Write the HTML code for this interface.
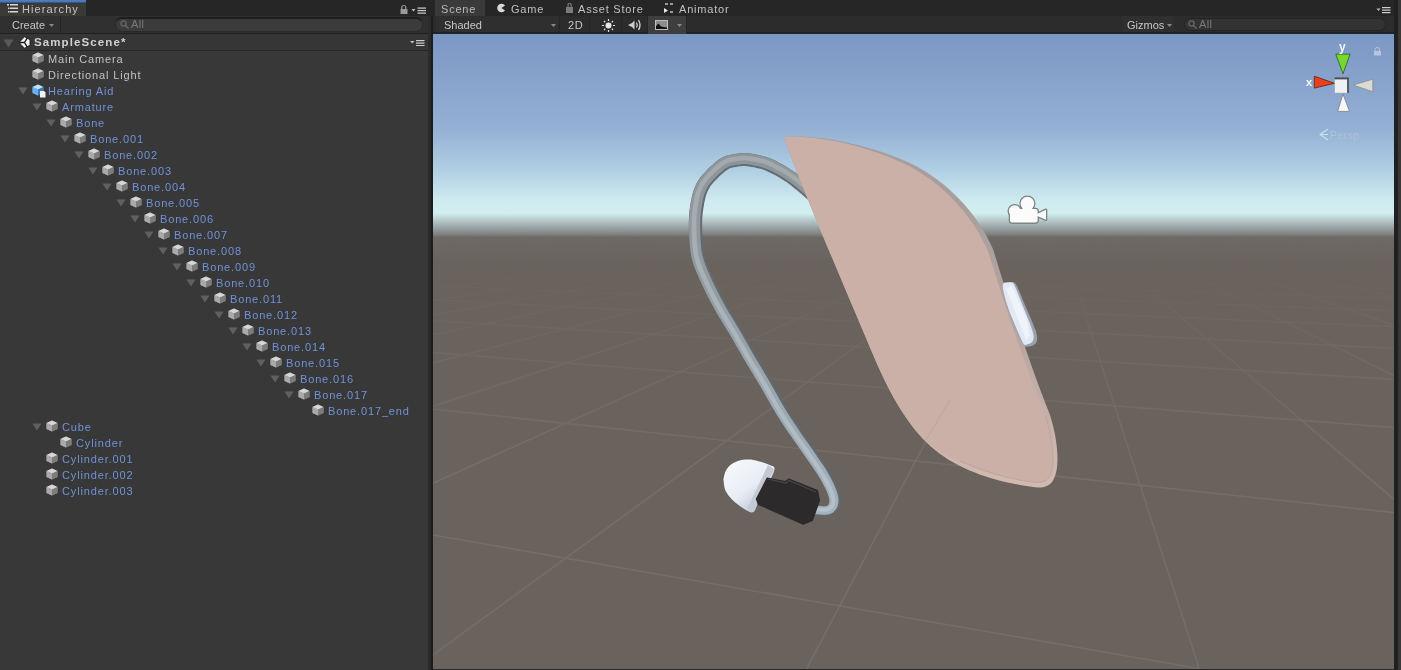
<!DOCTYPE html>
<html><head><meta charset="utf-8">
<style>
*{margin:0;padding:0;box-sizing:border-box}
html,body{width:1401px;height:670px;overflow:hidden;background:#282828;font-family:"Liberation Sans",sans-serif;font-size:11px;color:#c2c2c2}
.abs{position:absolute}
svg{display:block}
#tabbar{left:0;top:0;width:1401px;height:16px;background:#262626}
#hier{left:0;top:34px;width:428px;height:636px;background:#383838}
#hsplit{left:428px;top:16px;width:5px;height:654px;background:#1c1c1c;border-left:3px solid #2b2b2b}
#htab{left:0;top:0;width:86px;height:16px;background:linear-gradient(#4f7fc4 0,#4a74b0 2px,#2e3a4c 3px,#3a3a37 4px,#3a3a37 100%)}
#htoolbar{left:0;top:16px;width:428px;height:18px;background:#303030;border-bottom:1px solid #202020}
#scene{left:433px;top:34px;width:961px;height:635px;background:#6a625c;overflow:hidden}
#stoolbar{left:433px;top:16px;width:961px;height:18px;background:#2c2c2c;border-bottom:2px solid #1e2326}
#stab{left:435px;top:0;width:50px;height:16px;background:#3a3a3a}
#rightedge{left:1394px;top:0px;width:5px;height:670px;background:#202020}
#rightedge2{left:1398px;top:0px;width:3px;height:670px;background:#383838}
.hr{position:absolute;height:16px;line-height:18px;white-space:nowrap;letter-spacing:0.85px;color:#c2c2c2;will-change:transform}
.hr.blue{color:#7192d8}
.txt{position:absolute;z-index:3;will-change:transform;white-space:nowrap;letter-spacing:0.8px;line-height:16px;height:16px}
#sceneheader{left:0;top:34px;width:428px;height:16px;background:#393939;border-bottom:1px solid #2a2a2a}
</style></head><body>
<div class="abs" id="tabbar"></div>
<div class="abs" id="hier"></div>
<div class="abs" id="hsplit"></div>
<div class="abs" id="rightedge"></div><div class="abs" id="rightedge2"></div>
<div class="abs" id="htab"></div>
<div class="txt" style="left:22px;top:1px;color:#c0c4c4;letter-spacing:1.1px">Hierarchy</div>
<div class="abs" id="htoolbar"></div>
<div class="txt" style="left:12px;top:17px;color:#c4c4c4;letter-spacing:0px">Create</div>
<div class="abs" id="stoolbar"></div>
<div class="abs" id="stab"></div>
<div class="txt" style="left:441px;top:1px;color:#b8b8b8">Scene</div>
<div class="txt" style="left:511px;top:1px;color:#c0c0c0">Game</div>
<div class="txt" style="left:578px;top:1px;color:#c0c0c0">Asset Store</div>
<div class="txt" style="left:679px;top:1px;color:#c0c0c0">Animator</div>
<div class="txt" style="left:444px;top:17px;color:#c8c8c8;letter-spacing:0px">Shaded</div>
<div class="txt" style="left:568px;top:17px;color:#c8c8c8;letter-spacing:0.6px">2D</div>
<div class="txt" style="left:1127px;top:17px;color:#c8c8c8;letter-spacing:0px">Gizmos</div>
<div class="abs" id="scene">
<svg width="961" height="635" viewBox="433 34 961 635">
<defs>
<linearGradient id="sky" x1="0" y1="34" x2="0" y2="260" gradientUnits="userSpaceOnUse">
<stop offset="0" stop-color="#7b97c4"/>
<stop offset="0.42" stop-color="#94b0d4"/>
<stop offset="0.62" stop-color="#b4d2e4"/>
<stop offset="0.74" stop-color="#cfebf0"/>
<stop offset="0.793" stop-color="#d2eef0"/>
<stop offset="0.828" stop-color="#b4c4c8"/>
<stop offset="0.858" stop-color="#98a2a4"/>
<stop offset="0.884" stop-color="#828684"/>
<stop offset="0.9" stop-color="#6e6a67"/>
<stop offset="1" stop-color="#6a645f"/>
</linearGradient>
<linearGradient id="gm" x1="0" y1="225" x2="0" y2="460" gradientUnits="userSpaceOnUse"><stop offset="0" stop-color="#000"/><stop offset="0.2" stop-color="#181818"/><stop offset="0.45" stop-color="#707070"/><stop offset="1" stop-color="#fff"/></linearGradient>
<mask id="gridmask" maskUnits="userSpaceOnUse" x="433" y="34" width="961" height="635"><rect x="433" y="34" width="961" height="635" fill="url(#gm)"/></mask>
<linearGradient id="strip" x1="0" y1="140" x2="0" y2="490" gradientUnits="userSpaceOnUse"><stop offset="0" stop-color="#a49c9c"/><stop offset="0.5" stop-color="#b3a39e"/><stop offset="1" stop-color="#d2bab2"/></linearGradient>
<linearGradient id="domeg" x1="728" y1="462" x2="765" y2="508" gradientUnits="userSpaceOnUse"><stop offset="0" stop-color="#f8f9fc"/><stop offset="0.55" stop-color="#e9edf6"/><stop offset="1" stop-color="#b9c2d4"/></linearGradient>
<linearGradient id="tubeA" x1="0" y1="150" x2="0" y2="520" gradientUnits="userSpaceOnUse"><stop offset="0" stop-color="#656c72"/><stop offset="1" stop-color="#5d6870"/></linearGradient>
<linearGradient id="tubeB" x1="0" y1="150" x2="0" y2="520" gradientUnits="userSpaceOnUse"><stop offset="0" stop-color="#8e9599"/><stop offset="0.35" stop-color="#929ba0"/><stop offset="1" stop-color="#a4b2bc"/></linearGradient>
<linearGradient id="tubeC" x1="0" y1="150" x2="0" y2="520" gradientUnits="userSpaceOnUse"><stop offset="0" stop-color="#a4abaf"/><stop offset="1" stop-color="#b6c4ce"/></linearGradient>
</defs>
<rect x="433" y="34" width="961" height="635" fill="#6a625c"/>
<rect x="433" y="34" width="961" height="226" fill="url(#sky)"/>
<!-- grid lines -->
<g stroke="#766d67" stroke-width="1.6" fill="none" mask="url(#gridmask)"><line x1="839.6" y1="222.0" x2="433.0" y2="254.8"/><line x1="854.0" y1="222.0" x2="433.0" y2="258.5"/><line x1="868.4" y1="222.0" x2="433.0" y2="262.7"/><line x1="882.8" y1="222.0" x2="433.0" y2="267.7"/><line x1="897.1" y1="222.0" x2="433.0" y2="273.6"/><line x1="911.5" y1="222.0" x2="433.0" y2="280.8"/><line x1="925.9" y1="222.0" x2="433.0" y2="289.5"/><line x1="940.3" y1="222.0" x2="433.0" y2="300.6"/><line x1="954.7" y1="222.0" x2="433.0" y2="315.1"/><line x1="969.1" y1="222.0" x2="433.0" y2="334.7"/><line x1="983.5" y1="222.0" x2="433.0" y2="362.7"/><line x1="997.9" y1="222.0" x2="433.0" y2="406.3"/><line x1="1012.3" y1="222.0" x2="433.0" y2="483.2"/><line x1="1026.7" y1="222.0" x2="433.0" y2="654.9"/><line x1="1041.1" y1="222.0" x2="806.5" y2="669.0"/><line x1="1055.5" y1="222.0" x2="1199.3" y2="669.0"/><line x1="1069.9" y1="222.0" x2="1394.0" y2="499.4"/><line x1="1084.3" y1="222.0" x2="1394.0" y2="375.7"/><line x1="1098.7" y1="222.0" x2="1394.0" y2="325.2"/><line x1="1113.0" y1="222.0" x2="1394.0" y2="297.8"/><line x1="1127.4" y1="222.0" x2="1394.0" y2="280.5"/><line x1="745.1" y1="222.0" x2="1394.0" y2="227.0"/><line x1="684.9" y1="222.0" x2="1394.0" y2="227.6"/><line x1="624.7" y1="222.0" x2="1394.0" y2="228.3"/><line x1="564.5" y1="222.0" x2="1394.0" y2="229.0"/><line x1="504.3" y1="222.0" x2="1394.0" y2="229.7"/><line x1="444.1" y1="222.0" x2="1394.0" y2="230.5"/><line x1="433.0" y1="222.5" x2="1394.0" y2="231.3"/><line x1="433.0" y1="223.0" x2="1394.0" y2="232.2"/><line x1="433.0" y1="223.7" x2="1394.0" y2="233.2"/><line x1="433.0" y1="224.3" x2="1394.0" y2="234.2"/><line x1="433.0" y1="225.1" x2="1394.0" y2="235.3"/><line x1="433.0" y1="225.9" x2="1394.0" y2="236.5"/><line x1="433.0" y1="226.7" x2="1394.0" y2="237.7"/><line x1="433.0" y1="227.6" x2="1394.0" y2="239.1"/><line x1="433.0" y1="228.6" x2="1394.0" y2="240.6"/><line x1="433.0" y1="229.7" x2="1394.0" y2="242.3"/><line x1="433.0" y1="230.9" x2="1394.0" y2="244.1"/><line x1="433.0" y1="232.2" x2="1394.0" y2="246.1"/><line x1="433.0" y1="233.7" x2="1394.0" y2="248.3"/><line x1="433.0" y1="235.3" x2="1394.0" y2="250.7"/><line x1="433.0" y1="237.2" x2="1394.0" y2="253.5"/><line x1="433.0" y1="239.2" x2="1394.0" y2="256.6"/><line x1="433.0" y1="241.6" x2="1394.0" y2="260.1"/><line x1="433.0" y1="244.2" x2="1394.0" y2="264.2"/><line x1="433.0" y1="247.3" x2="1394.0" y2="268.9"/><line x1="433.0" y1="251.0" x2="1394.0" y2="274.4"/><line x1="433.0" y1="255.3" x2="1394.0" y2="280.9"/><line x1="433.0" y1="260.6" x2="1394.0" y2="288.8"/><line x1="433.0" y1="267.0" x2="1394.0" y2="298.5"/><line x1="433.0" y1="275.1" x2="1394.0" y2="310.8"/><line x1="433.0" y1="285.7" x2="1394.0" y2="326.7"/><line x1="433.0" y1="300.1" x2="1394.0" y2="348.4"/><line x1="433.0" y1="320.7" x2="1394.0" y2="379.4"/><line x1="433.0" y1="352.6" x2="1394.0" y2="427.6"/><line x1="433.0" y1="409.0" x2="1394.0" y2="512.6"/><line x1="433.0" y1="535.0" x2="1201.3" y2="669.0"/></g>
<path d="M822.3 195.1 L820.7 193.7 L818.4 191.7 L815.7 189.3 L812.8 186.7 L810.0 184.2 L807.4 182.0 L805.1 180.1 L802.9 178.3 L800.7 176.5 L798.4 174.8 L796.2 173.1 L793.9 171.5 L791.6 169.9 L789.2 168.4 L786.9 166.9 L784.5 165.5 L782.2 164.2 L779.8 162.9 L777.5 161.8 L775.2 160.6 L772.9 159.5 L770.5 158.5 L767.9 157.6 L765.3 156.7 L762.5 155.9 L759.6 155.2 L756.6 154.6 L753.7 154.1 L750.9 153.6 L748.4 153.3 L746.0 153.1 L743.9 153.1 L741.8 153.1 L739.8 153.2 L737.8 153.5 L735.9 153.8 L733.9 154.1 L731.8 154.4 L729.4 154.9 L726.7 155.6 L723.9 156.7 L721.0 158.2 L718.2 160.1 L715.3 162.3 L712.6 164.7 L709.9 167.1 L707.4 169.6 L705.2 171.9 L703.2 174.0 L701.4 176.1 L699.7 178.3 L698.2 180.6 L696.7 183.1 L695.4 185.8 L694.2 188.6 L693.2 191.6 L692.4 194.6 L691.6 197.7 L691.0 200.8 L690.4 203.9 L690.0 207.0 L689.5 210.2 L689.2 213.5 L689.0 217.1 L688.8 220.9 L688.8 225.0 L688.9 229.6 L689.0 234.8 L689.3 240.2 L689.7 245.8 L690.3 251.4 L691.2 256.8 L692.5 261.7 L694.0 266.4 L695.7 270.9 L697.6 275.2 L699.4 279.3 L701.3 283.5 L703.3 287.8 L705.3 292.1 L707.5 296.3 L709.7 300.6 L712.0 304.9 L714.3 309.1 L716.8 313.5 L719.4 317.8 L722.0 322.1 L724.6 326.3 L727.2 330.6 L729.7 334.7 L732.1 338.9 L734.6 343.1 L737.0 347.4 L739.4 351.6 L741.9 355.8 L744.3 360.1 L746.9 364.3 L749.4 368.5 L751.9 372.6 L754.5 376.8 L757.0 381.1 L759.6 385.4 L762.3 390.1 L765.1 394.9 L767.9 399.9 L770.7 404.9 L773.5 409.7 L776.1 414.1 L778.6 418.1 L780.9 421.8 L783.2 425.2 L785.4 428.5 L787.7 431.8 L790.0 435.2 L792.4 438.7 L794.9 442.2 L797.3 445.7 L799.8 449.1 L802.3 452.6 L804.7 456.0 L807.1 459.5 L809.6 463.1 L812.1 466.6 L814.4 470.0 L816.6 473.3 L818.6 476.5 L820.5 479.7 L822.3 482.9 L823.9 486.0 L825.4 488.9 L826.6 491.6 L827.6 494.0 L828.3 496.1 L828.8 497.9 L829.1 499.4 L829.2 500.7 L829.2 501.7 L829.1 502.6 L828.8 503.4 L828.5 504.1 L828.2 504.7 L827.8 505.1 L827.3 505.5 L826.7 505.7 L825.3 506.0 L822.9 506.0 L820.0 505.9 L817.0 505.6 L814.3 505.4 L812.4 505.3 L811.6 515.7 L813.4 515.9 L816.0 516.2 L819.2 516.5 L822.6 516.7 L826.1 516.7 L829.3 516.3 L832.2 515.2 L834.5 513.7 L836.5 511.9 L838.0 509.8 L839.1 507.7 L839.9 505.4 L840.4 503.0 L840.5 500.5 L840.4 498.0 L840.0 495.4 L839.3 492.8 L838.4 490.0 L837.3 487.1 L835.9 483.9 L834.4 480.7 L832.6 477.3 L830.8 473.9 L828.8 470.5 L826.6 467.0 L824.3 463.4 L821.9 459.8 L819.4 456.2 L816.9 452.7 L814.5 449.2 L812.1 445.7 L809.6 442.2 L807.2 438.7 L804.8 435.2 L802.4 431.8 L800.0 428.4 L797.8 425.0 L795.6 421.7 L793.4 418.5 L791.3 415.1 L789.0 411.6 L786.7 407.7 L784.1 403.4 L781.5 398.8 L778.7 393.8 L775.9 388.8 L773.1 383.9 L770.4 379.2 L767.8 374.7 L765.2 370.4 L762.7 366.2 L760.2 362.0 L757.7 357.9 L755.3 353.7 L752.8 349.5 L750.4 345.3 L748.0 341.1 L745.6 336.8 L743.2 332.5 L740.7 328.3 L738.2 323.9 L735.6 319.7 L733.0 315.4 L730.4 311.2 L728.0 307.0 L725.7 302.9 L723.4 298.7 L721.2 294.6 L719.1 290.4 L717.1 286.3 L715.1 282.2 L713.3 278.1 L711.4 274.0 L709.6 269.9 L707.9 266.0 L706.5 262.0 L705.2 258.1 L704.2 254.0 L703.4 249.6 L702.9 244.7 L702.5 239.5 L702.3 234.3 L702.2 229.4 L702.2 225.0 L702.2 221.2 L702.3 217.8 L702.6 214.7 L702.9 211.8 L703.3 209.0 L703.8 206.1 L704.2 203.2 L704.8 200.5 L705.4 197.9 L706.0 195.5 L706.8 193.3 L707.6 191.2 L708.5 189.4 L709.5 187.7 L710.5 186.1 L711.7 184.5 L713.2 182.8 L714.8 180.9 L716.8 178.9 L719.0 176.7 L721.3 174.5 L723.7 172.4 L725.9 170.7 L727.8 169.4 L729.3 168.6 L730.8 168.0 L732.4 167.6 L734.1 167.2 L736.0 166.9 L737.9 166.6 L739.6 166.3 L741.1 166.2 L742.4 166.1 L743.7 166.1 L745.2 166.1 L747.0 166.3 L749.2 166.5 L751.6 166.9 L754.2 167.3 L756.7 167.9 L759.2 168.5 L761.5 169.1 L763.6 169.8 L765.6 170.6 L767.6 171.4 L769.6 172.4 L771.7 173.4 L773.8 174.5 L775.9 175.6 L778.0 176.8 L780.2 178.0 L782.3 179.4 L784.4 180.7 L786.5 182.1 L788.5 183.6 L790.5 185.1 L792.6 186.7 L794.6 188.4 L796.8 190.1 L799.0 192.0 L801.5 194.1 L804.3 196.5 L807.1 199.0 L809.8 201.4 L812.0 203.4 L813.7 204.9Z" fill="url(#tubeA)"/>
<path d="M822.2 195.3 L820.6 193.8 L818.3 191.8 L815.6 189.4 L812.7 186.9 L809.8 184.4 L807.3 182.2 L805.0 180.3 L802.7 178.4 L800.5 176.7 L798.3 174.9 L796.1 173.3 L793.8 171.6 L791.5 170.1 L789.1 168.5 L786.8 167.1 L784.4 165.7 L782.1 164.4 L779.7 163.1 L777.4 161.9 L775.1 160.8 L772.8 159.7 L770.4 158.7 L767.9 157.7 L765.2 156.9 L762.4 156.1 L759.5 155.4 L756.6 154.8 L753.7 154.3 L750.9 153.8 L748.3 153.5 L746.0 153.3 L743.9 153.3 L741.8 153.3 L739.8 153.4 L737.9 153.7 L735.9 154.0 L734.0 154.3 L731.8 154.6 L729.4 155.1 L726.8 155.8 L724.0 156.9 L721.1 158.4 L718.3 160.2 L715.5 162.4 L712.7 164.8 L710.0 167.3 L707.5 169.7 L705.3 172.0 L703.4 174.2 L701.6 176.3 L699.9 178.4 L698.3 180.7 L696.9 183.2 L695.6 185.8 L694.4 188.7 L693.4 191.6 L692.6 194.6 L691.8 197.7 L691.2 200.8 L690.6 203.9 L690.2 207.1 L689.7 210.2 L689.4 213.6 L689.2 217.1 L689.0 220.9 L689.0 225.0 L689.1 229.6 L689.2 234.8 L689.5 240.2 L689.9 245.8 L690.5 251.4 L691.4 256.7 L692.7 261.7 L694.2 266.4 L695.9 270.8 L697.8 275.1 L699.6 279.2 L701.5 283.4 L703.5 287.7 L705.5 292.0 L707.7 296.3 L709.9 300.5 L712.2 304.8 L714.5 309.0 L717.0 313.4 L719.5 317.7 L722.2 322.0 L724.8 326.2 L727.3 330.5 L729.9 334.6 L732.3 338.8 L734.7 343.0 L737.1 347.3 L739.6 351.5 L742.0 355.7 L744.5 360.0 L747.0 364.2 L749.6 368.4 L752.1 372.5 L754.6 376.7 L757.2 381.0 L759.8 385.3 L762.5 390.0 L765.2 394.8 L768.1 399.8 L770.9 404.8 L773.7 409.6 L776.3 414.0 L778.8 418.0 L781.1 421.6 L783.4 425.1 L785.6 428.4 L787.8 431.7 L790.1 435.1 L792.6 438.6 L795.0 442.1 L797.5 445.6 L800.0 449.0 L802.4 452.5 L804.8 455.9 L807.3 459.4 L809.8 463.0 L812.2 466.5 L814.6 469.9 L816.8 473.2 L818.8 476.4 L820.7 479.6 L822.4 482.8 L824.1 485.9 L825.6 488.8 L826.8 491.5 L827.8 493.9 L828.5 496.0 L829.0 497.9 L829.3 499.4 L829.4 500.7 L829.4 501.8 L829.3 502.7 L829.0 503.5 L828.7 504.2 L828.3 504.8 L827.9 505.2 L827.4 505.6 L826.7 505.9 L825.3 506.2 L822.9 506.2 L820.0 506.1 L817.0 505.8 L814.3 505.6 L812.4 505.5 L811.8 513.7 L813.6 513.9 L816.2 514.2 L819.3 514.5 L822.7 514.7 L825.9 514.7 L828.8 514.3 L831.3 513.4 L833.3 512.2 L835.0 510.6 L836.3 508.8 L837.3 506.9 L838.0 504.9 L838.4 502.8 L838.5 500.5 L838.4 498.2 L838.0 495.9 L837.4 493.4 L836.5 490.7 L835.5 487.9 L834.1 484.8 L832.6 481.6 L830.9 478.2 L829.0 474.9 L827.1 471.5 L825.0 468.0 L822.7 464.5 L820.2 460.9 L817.8 457.4 L815.3 453.8 L812.9 450.3 L810.5 446.8 L808.0 443.3 L805.6 439.9 L803.1 436.4 L800.7 433.0 L798.4 429.5 L796.1 426.1 L793.9 422.8 L791.8 419.6 L789.6 416.2 L787.3 412.6 L785.0 408.8 L782.4 404.4 L779.7 399.7 L777.0 394.8 L774.1 389.8 L771.4 384.9 L768.7 380.2 L766.0 375.7 L763.5 371.4 L761.0 367.2 L758.5 363.0 L756.0 358.9 L753.5 354.7 L751.1 350.5 L748.7 346.3 L746.3 342.0 L743.9 337.8 L741.5 333.5 L739.0 329.3 L736.5 325.0 L733.9 320.7 L731.3 316.4 L728.7 312.2 L726.3 308.0 L723.9 303.8 L721.7 299.7 L719.5 295.5 L717.3 291.3 L715.3 287.2 L713.3 283.1 L711.4 278.9 L709.6 274.8 L707.8 270.7 L706.1 266.7 L704.6 262.7 L703.3 258.7 L702.2 254.5 L701.4 249.9 L700.9 244.8 L700.5 239.6 L700.3 234.4 L700.2 229.4 L700.2 225.0 L700.2 221.1 L700.3 217.7 L700.6 214.5 L700.9 211.6 L701.3 208.7 L701.8 205.8 L702.3 202.9 L702.8 200.1 L703.4 197.4 L704.1 194.9 L704.9 192.6 L705.8 190.4 L706.7 188.4 L707.8 186.6 L708.9 184.9 L710.2 183.2 L711.7 181.4 L713.4 179.5 L715.4 177.5 L717.6 175.2 L720.0 173.0 L722.4 170.9 L724.7 169.1 L726.7 167.7 L728.5 166.8 L730.2 166.1 L731.9 165.6 L733.7 165.3 L735.6 165.0 L737.6 164.6 L739.4 164.4 L740.9 164.2 L742.3 164.1 L743.7 164.1 L745.4 164.1 L747.2 164.3 L749.5 164.5 L751.9 164.9 L754.5 165.4 L757.2 165.9 L759.7 166.5 L762.1 167.2 L764.3 167.9 L766.4 168.7 L768.4 169.6 L770.5 170.6 L772.6 171.6 L774.7 172.7 L776.9 173.8 L779.0 175.1 L781.2 176.3 L783.4 177.7 L785.5 179.1 L787.6 180.5 L789.7 182.0 L791.8 183.5 L793.8 185.1 L795.9 186.8 L798.1 188.6 L800.3 190.4 L802.8 192.6 L805.6 195.0 L808.4 197.5 L811.1 199.9 L813.4 201.9 L815.0 203.4Z" fill="url(#tubeB)"/>
<path d="M820.5 197.2 L818.9 195.7 L816.6 193.7 L813.9 191.3 L811.0 188.8 L808.2 186.3 L805.6 184.1 L803.3 182.2 L801.1 180.4 L799.0 178.6 L796.8 176.9 L794.6 175.3 L792.4 173.7 L790.1 172.2 L787.8 170.7 L785.5 169.2 L783.2 167.9 L780.8 166.6 L778.5 165.4 L776.3 164.2 L774.0 163.1 L771.8 162.0 L769.4 161.0 L767.0 160.1 L764.5 159.3 L761.8 158.5 L759.0 157.9 L756.1 157.3 L753.3 156.7 L750.6 156.3 L748.1 156.0 L745.9 155.9 L743.8 155.8 L741.9 155.8 L740.1 155.9 L738.2 156.2 L736.3 156.5 L734.3 156.8 L732.3 157.1 L730.0 157.6 L727.6 158.2 L725.0 159.2 L722.5 160.5 L719.8 162.3 L717.1 164.4 L714.4 166.7 L711.8 169.2 L709.4 171.5 L707.2 173.8 L705.3 175.9 L703.6 177.9 L702.0 180.0 L700.6 182.1 L699.2 184.4 L698.0 186.9 L696.9 189.6 L695.9 192.4 L695.1 195.3 L694.4 198.3 L693.8 201.3 L693.3 204.4 L692.8 207.5 L692.4 210.6 L692.1 213.8 L691.8 217.2 L691.7 220.9 L691.7 225.0 L691.7 229.6 L691.8 234.7 L692.1 240.1 L692.5 245.6 L693.1 251.0 L694.0 256.2 L695.2 261.0 L696.6 265.5 L698.3 269.9 L700.1 274.1 L702.0 278.2 L703.8 282.4 L705.8 286.6 L707.8 290.9 L709.9 295.1 L712.1 299.3 L714.4 303.6 L716.7 307.8 L719.1 312.1 L721.7 316.4 L724.3 320.7 L726.9 324.9 L729.5 329.2 L732.0 333.4 L734.4 337.6 L736.8 341.8 L739.3 346.1 L741.7 350.3 L744.1 354.5 L746.6 358.8 L749.1 363.0 L751.6 367.2 L754.1 371.3 L756.7 375.5 L759.2 379.8 L761.8 384.2 L764.5 388.8 L767.3 393.7 L770.1 398.7 L772.9 403.6 L775.7 408.4 L778.3 412.8 L780.7 416.8 L783.0 420.4 L785.3 423.8 L787.5 427.1 L789.7 430.4 L792.0 433.8 L794.4 437.3 L796.9 440.8 L799.3 444.3 L801.8 447.8 L804.2 451.2 L806.6 454.7 L809.1 458.2 L811.6 461.7 L814.0 465.2 L816.4 468.7 L818.6 472.1 L820.6 475.3 L822.5 478.6 L824.3 481.8 L826.0 484.9 L827.5 487.9 L828.7 490.7 L829.7 493.2 L830.4 495.4 L831.0 497.4 L831.3 499.2 L831.4 500.7 L831.4 502.0 L831.1 503.1 L830.8 504.2 L830.3 505.2 L829.8 506.0 L829.1 506.7 L828.2 507.3 L827.2 507.7 L825.5 508.0 L822.9 508.0 L819.8 507.8 L816.8 507.6 L814.2 507.3 L812.3 507.2 L812.0 510.8 L813.8 511.0 L816.5 511.3 L819.6 511.6 L822.8 511.7 L825.7 511.7 L828.1 511.4 L829.9 510.7 L831.4 509.7 L832.7 508.6 L833.7 507.2 L834.4 505.7 L834.9 504.1 L835.3 502.4 L835.4 500.6 L835.2 498.7 L834.9 496.6 L834.3 494.3 L833.5 491.8 L832.4 489.1 L831.1 486.2 L829.6 483.1 L827.9 479.8 L826.1 476.5 L824.2 473.2 L822.1 469.8 L819.9 466.4 L817.5 462.9 L815.0 459.3 L812.5 455.8 L810.1 452.3 L807.7 448.8 L805.2 445.3 L802.8 441.8 L800.3 438.4 L797.9 434.9 L795.5 431.4 L793.2 428.1 L791.0 424.8 L788.8 421.5 L786.6 418.1 L784.4 414.5 L782.0 410.6 L779.4 406.2 L776.7 401.5 L773.9 396.6 L771.1 391.5 L768.3 386.6 L765.6 382.0 L763.0 377.5 L760.4 373.2 L757.9 369.0 L755.4 364.9 L752.9 360.7 L750.4 356.5 L748.0 352.3 L745.5 348.1 L743.1 343.8 L740.7 339.6 L738.3 335.4 L735.8 331.1 L733.3 326.9 L730.7 322.6 L728.1 318.3 L725.6 314.1 L723.1 309.9 L720.7 305.6 L718.4 301.4 L716.2 297.2 L714.0 293.0 L711.9 288.9 L709.9 284.7 L708.0 280.5 L706.2 276.3 L704.3 272.2 L702.6 268.1 L701.0 264.0 L699.6 259.7 L698.5 255.2 L697.7 250.4 L697.1 245.2 L696.7 239.8 L696.5 234.5 L696.4 229.5 L696.3 225.0 L696.4 221.0 L696.5 217.5 L696.7 214.2 L697.1 211.1 L697.5 208.1 L698.0 205.1 L698.5 202.2 L699.0 199.3 L699.7 196.5 L700.4 193.8 L701.3 191.2 L702.3 188.8 L703.3 186.6 L704.5 184.6 L705.8 182.7 L707.2 180.8 L708.8 178.9 L710.6 177.0 L712.7 174.8 L715.0 172.5 L717.5 170.2 L720.0 168.0 L722.5 166.0 L724.8 164.5 L726.9 163.4 L729.0 162.6 L731.1 162.0 L733.1 161.6 L735.1 161.3 L737.0 161.0 L738.8 160.7 L740.5 160.5 L742.1 160.4 L743.8 160.3 L745.6 160.4 L747.6 160.6 L750.0 160.9 L752.5 161.2 L755.2 161.7 L758.0 162.3 L760.7 162.9 L763.2 163.6 L765.5 164.4 L767.7 165.3 L769.9 166.2 L772.1 167.2 L774.2 168.3 L776.4 169.4 L778.7 170.6 L780.9 171.8 L783.1 173.1 L785.3 174.5 L787.6 175.9 L789.8 177.4 L791.9 179.0 L794.0 180.6 L796.1 182.2 L798.3 183.9 L800.4 185.7 L802.7 187.6 L805.2 189.7 L808.0 192.2 L810.9 194.7 L813.6 197.1 L815.9 199.1 L817.5 200.6Z" fill="url(#tubeC)" opacity="0.9"/>
<path d="M784 137 C815 134 870 144 912 164 C946 181 977 212 993 249 C1006 292 1030 365 1050 415 C1058 440 1061 470 1052 482 C1047 488 1040 488.5 1030 486.5 C1000 482.5 962 472 935 450 C912 432 893 400 878 366 C850 300 795 172 784 137Z" fill="url(#strip)"/>
<path d="M784 137 C815 134.5 868 145 909 166 C942 183.5 972 214 988 251 C1001 293 1025 366 1045.5 416 C1053.5 441 1056 468 1048.5 478.5 C1044 483 1038 483 1029 481.5 C1000 477 962 467 935 447.5 C912 431 893 400 878 366 C850 300 795 172 784 137Z" fill="#cab0a7"/>
<path d="M960 461 C990 474 1015 480 1029 481.5 C1038 483 1044 483 1048.5 478.5 C1056 468 1053.5 441 1045.5 416" fill="none" stroke="#b69e96" stroke-width="0.8" opacity="0.8"/>
<path d="M950 400 L926 440" stroke="#b89c92" stroke-width="0.8" fill="none" opacity="0.7"/>
<path d="M1003.4 282.8 L1005.2 282.6 L1007.8 282.2 L1010.6 282.0 L1012.8 282.1 L1014.1 282.4 L1014.9 282.9 L1015.7 283.9 L1016.9 286.1 L1018.6 289.8 L1020.7 294.6 L1022.9 299.9 L1025.0 305.0 L1027.1 309.9 L1029.3 315.0 L1031.3 319.8 L1033.0 323.8 L1034.2 326.9 L1035.2 329.3 L1035.9 331.3 L1036.4 333.2 L1036.8 335.1 L1037.1 336.8 L1037.1 338.4 L1037.0 339.9 L1036.7 341.3 L1036.2 342.5 L1035.4 343.7 L1034.4 344.6 L1032.9 345.4 L1031.1 346.0 L1029.2 346.4 L1027.6 346.6 L1026.5 346.8 L1025.6 346.9 L1024.7 346.6 L1023.6 345.3 L1022.2 343.0 L1020.6 340.0 L1018.8 336.2 L1016.9 331.8 L1014.6 326.4 L1012.1 320.0 L1009.6 313.5 L1007.5 307.6 L1005.9 302.2 L1004.5 297.1 L1003.5 292.5 L1002.8 288.8 L1002.6 286.3 L1002.8 284.6 L1003.2 283.6 L1003.4 282.8Z" fill="#9aa2ac"/>
<path d="M1003.4 283.0 L1005.0 282.8 L1007.2 282.5 L1009.6 282.3 L1011.5 282.5 L1012.6 282.8 L1013.3 283.3 L1014.0 284.4 L1015.0 286.5 L1016.6 290.1 L1018.5 294.8 L1020.5 300.0 L1022.5 305.0 L1024.5 309.9 L1026.5 315.0 L1028.4 319.8 L1030.0 323.8 L1031.1 326.9 L1031.9 329.2 L1032.5 331.2 L1033.0 333.0 L1033.4 334.7 L1033.6 336.1 L1033.6 337.3 L1033.5 338.5 L1033.2 339.7 L1032.8 340.7 L1032.3 341.7 L1031.5 342.5 L1030.4 343.2 L1029.1 343.8 L1027.7 344.2 L1026.5 344.5 L1025.7 344.8 L1025.1 345.2 L1024.5 345.1 L1023.6 344.0 L1022.4 341.9 L1021.0 338.9 L1019.3 335.3 L1017.5 331.0 L1015.3 325.8 L1012.7 319.6 L1010.1 313.4 L1008.0 307.6 L1006.3 302.3 L1004.9 297.2 L1003.8 292.7 L1003.0 289.0 L1002.7 286.5 L1002.9 284.8 L1003.2 283.8 L1003.4 283.0Z" fill="#e2e9f5"/>
<path d="M1006 288 L1012 286 L1026 318 L1030 336 L1026 340 Z" fill="#f3f6fb" opacity="0.8"/>
<path d="M723.4 479.1 L723.7 477.9 L724.1 476.1 L724.6 474.1 L725.2 472.0 L726.1 470.2 L727.2 468.6 L728.4 467.0 L729.8 465.5 L731.4 464.2 L733.3 463.0 L735.5 462.0 L737.9 461.0 L740.5 460.3 L743.2 459.7 L745.8 459.4 L748.3 459.4 L750.9 459.6 L753.5 460.1 L756.0 460.6 L758.4 461.2 L760.7 461.8 L763.1 462.5 L765.3 463.2 L767.3 464.0 L769.1 464.8 L770.7 465.4 L772.3 465.9 L773.6 466.4 L774.4 467.5 L774.5 469.3 L773.7 472.2 L772.1 475.9 L770.0 480.1 L767.9 484.3 L766.0 488.0 L764.3 491.3 L762.6 494.5 L761.0 497.6 L759.4 500.4 L758.0 503.0 L756.9 505.4 L756.1 507.8 L755.3 509.8 L754.3 511.4 L753.0 512.3 L751.2 512.4 L749.1 511.7 L746.9 510.6 L744.5 509.2 L742.3 507.8 L740.1 506.3 L737.8 504.6 L735.5 502.7 L733.4 500.8 L731.5 498.9 L729.9 497.1 L728.4 495.4 L727.2 493.6 L726.1 491.8 L725.2 489.9 L724.5 487.7 L724.1 485.2 L723.8 482.7 L723.6 480.6 L723.4 479.1Z" fill="url(#domeg)"/>
<path d="M768 465 L774.5 469.3 L760 498 L753 512 L747 509 Z" fill="#c4cad4"/>
<path d="M767.3 478.2 L785.3 481.8 L788.9 479.1 L817.5 490.8 L819.3 500.6 L812.2 520.4 L803.2 524.0 L758.4 504.2 L756.6 498.9Z" fill="#2d2a2b" stroke="#2d2a2b" stroke-width="1.5" stroke-linejoin="round"/>
<path d="M768 479 L786 483 L789 480.5 L816 492" stroke="#4a4648" stroke-width="1.2" fill="none"/>
<g fill="#7d8484" stroke="#7d8484" stroke-width="2.6" stroke-linejoin="round"><circle cx="1014.6" cy="211" r="5.8"/><circle cx="1027.4" cy="203.6" r="6.8"/><rect x="1010" y="209" width="27.6" height="13.6" rx="2"/><path d="M1035 215 L1046 209.8 L1046 219.8 Z"/></g><g fill="#fbfbfb"><circle cx="1014.6" cy="211" r="5.8"/><circle cx="1027.4" cy="203.6" r="6.8"/><rect x="1010" y="209" width="27.6" height="13.6" rx="2"/><path d="M1035 215 L1046 209.8 L1046 219.8 Z"/></g>
<path d="M1335.8 54.1 L1350.1 54.1 L1343 73.8Z" fill="#74d830" stroke="#2e5a18" stroke-width="0.8"/><path d="M1314.3 76.2 L1314.3 88.1 L1334.6 83.3Z" fill="#e8401c" stroke="#6a1a0c" stroke-width="0.8"/><path d="M1372.8 79.2 L1372.8 91.7 L1353.1 85.1Z" fill="#dadcd4" stroke="#8a8e88" stroke-width="0.8"/><path d="M1337.6 111.4 L1349.5 111.4 L1343 94.1Z" fill="#f6f6f8" stroke="#7a8088" stroke-width="0.8"/><rect x="1334.6" y="77.4" width="14.3" height="15.5" fill="#4a5058"/><rect x="1334.6" y="79.4" width="12.5" height="13.5" fill="#eef0f4"/>
</svg>
</div>

<!-- hierarchy tab icon -->
<svg class="abs" style="left:7px;top:4px" width="11" height="9" viewBox="0 0 11 9"><g fill="#d8d8d8"><rect x="0" y="0" width="2" height="1.5"/><rect x="3" y="0" width="8" height="1.5"/><rect x="1" y="3.5" width="1.5" height="1.5"/><rect x="3" y="3.5" width="8" height="1.5"/><rect x="1" y="7" width="1.5" height="1.5"/><rect x="3" y="7" width="8" height="1.5"/></g></svg>
<!-- lock + menu (hierarchy) -->
<svg class="abs" style="left:400px;top:4px" width="27" height="11" viewBox="0 0 27 11"><path d="M1.8 5 V3.5 A2 2 0 0 1 5.8 3.5 V5" fill="none" stroke="#9a9a9a" stroke-width="1.2"/><rect x="0.5" y="5" width="7" height="5" fill="#9a9a9a"/><path d="M11.5 5 L15.5 5 L13.5 7.5Z" fill="#bdbdbd"/><g fill="#cfcfcf"><rect x="17.5" y="3.5" width="8.5" height="1.2"/><rect x="17.5" y="6" width="8.5" height="1.2"/><rect x="17.5" y="8.5" width="8.5" height="1.2"/></g></svg>
<!-- menu (scene) -->
<svg class="abs" style="left:1376px;top:6px" width="18" height="9" viewBox="0 0 18 9"><path d="M0.5 2.5 L4.5 2.5 L2.5 5Z" fill="#bdbdbd"/><g fill="#cfcfcf"><rect x="6" y="1" width="8.5" height="1.2"/><rect x="6" y="3.5" width="8.5" height="1.2"/><rect x="6" y="6" width="8.5" height="1.2"/></g></svg>
<!-- hierarchy search field -->
<div class="abs" style="left:115px;top:17px;width:308px;height:15px;border-radius:7px;background:#3b3b3b;border:1px solid #2a2a2a;border-top:2px solid #1e1e1e"></div>
<svg class="abs" style="left:120px;top:20px" width="9" height="9" viewBox="0 0 9 9"><circle cx="3.5" cy="3.5" r="2.6" fill="none" stroke="#6a6a6a" stroke-width="1.2"/><path d="M5.5 5.5 L8.5 8.5" stroke="#6a6a6a" stroke-width="1.3"/></svg>
<div class="txt" style="left:131px;top:16px;color:#7a7a7a;letter-spacing:0.3px">All</div>
<!-- create dropdown arrow -->
<svg class="abs" style="left:49px;top:24px" width="5" height="3" viewBox="0 0 5 3"><path d="M0 0 L5 0 L2.5 3Z" fill="#8a8a8a"/></svg>
<div class="abs" style="left:60px;top:16px;width:1px;height:18px;background:#262626"></div>
<!-- scene header row -->
<div class="abs" style="left:0;top:34px;width:428px;height:17px;background:#363636;border-bottom:1px solid #262626"></div>
<svg class="abs" style="left:3px;top:39px" width="11" height="9" viewBox="0 0 11 9"><path d="M0.5 0.5 L10.5 0.5 L5.5 8.5Z" fill="#5a5a5a"/></svg>
<svg class="abs" style="left:18px;top:36px" width="13" height="13" viewBox="0 0 13 13"><path d="M6.5 0.8 L12 3.8 L12 9.2 L6.5 12.2 L1 6.5Z" fill="#f4f4f4"/><path d="M6.5 6.5 L1 6.5 M6.5 6.5 L9.3 1.8 M6.5 6.5 L9.3 11.2" stroke="#1a1a1a" stroke-width="1.4"/><path d="M6.5 0.8 L12 3.8 L12 9.2 L6.5 12.2 L1 6.5Z" fill="none" stroke="#1a1a1a" stroke-width="0.8"/></svg>
<div class="txt" style="left:34px;top:34px;color:#d0d0d0;font-weight:bold;letter-spacing:1.1px;font-size:11.5px">SampleScene*</div>
<svg class="abs" style="left:410px;top:40px" width="15" height="6" viewBox="0 0 15 6"><path d="M0 1 L4.5 1 L2.25 3.5Z" fill="#bdbdbd"/><g fill="#cfcfcf"><rect x="6" y="0" width="8.5" height="1.2"/><rect x="6" y="2.5" width="8.5" height="1.2"/><rect x="6" y="5" width="8.5" height="1.2"/></g></svg>
<!-- scene tab icons -->
<svg class="abs" style="left:496px;top:3px" width="10" height="10" viewBox="0 0 10 10"><path d="M9 2.5 A4.3 4.3 0 1 0 9 7.5 L5.5 5Z" fill="#d8d8d8"/></svg>
<svg class="abs" style="left:566px;top:3px" width="8" height="10" viewBox="0 0 8 10"><rect x="0" y="4" width="7" height="6" fill="#7a7a7a"/><path d="M2 4 V2 A1.6 1.6 0 0 1 5.2 2 V4" fill="none" stroke="#7a7a7a" stroke-width="1.2"/></svg>
<svg class="abs" style="left:664px;top:3px" width="10" height="11" viewBox="0 0 10 11"><g fill="#9a9a9a"><rect x="1" y="0" width="3" height="2"/><rect x="6" y="0" width="3" height="2"/><rect x="6" y="8" width="3" height="2"/></g><path d="M0 5 L4 7.5 L0 10Z" fill="#e8e8e8"/></svg>
<!-- scene toolbar -->
<div class="abs" style="left:436px;top:16px;width:122px;height:16px;background:#2f2f2f"></div>
<svg class="abs" style="left:551px;top:24px" width="5" height="3" viewBox="0 0 5 3"><path d="M0 0 L5 0 L2.5 3Z" fill="#8a8a8a"/></svg>
<div class="abs" style="left:559px;top:16px;width:1px;height:18px;background:#262626"></div>
<div class="abs" style="left:589px;top:16px;width:1px;height:18px;background:#262626"></div>
<div class="abs" style="left:621px;top:16px;width:1px;height:18px;background:#262626"></div>
<div class="abs" style="left:647px;top:16px;width:1px;height:18px;background:#262626"></div>
<div class="abs" style="left:648px;top:16px;width:38px;height:18px;background:#3e3e3e"></div>
<div class="abs" style="left:686px;top:16px;width:1px;height:18px;background:#262626"></div>
<svg class="abs" style="left:602px;top:19px" width="13" height="13" viewBox="0 0 13 13"><circle cx="6.5" cy="6.5" r="3" fill="#e8e8e8"/><g stroke="#e0e0e0" stroke-width="1.2"><path d="M6.5 0 V2 M6.5 11 V13 M0 6.5 H2 M11 6.5 H13 M2 2 L3.3 3.3 M9.7 9.7 L11 11 M2 11 L3.3 9.7 M9.7 3.3 L11 2"/></g></svg>
<svg class="abs" style="left:627px;top:18px" width="16" height="14" viewBox="0 0 16 14"><path d="M1 7 L5 5 L7.5 2.5 L7.5 11.5 L5 9Z" fill="#d0d0d0"/><path d="M9.5 4.5 Q11 7 9.5 9.5 M11.5 2 Q14.5 7 11.5 12" fill="none" stroke="#d8d8d8" stroke-width="1.3"/></svg>
<svg class="abs" style="left:655px;top:20px" width="13" height="10" viewBox="0 0 13 10"><rect x="0.5" y="0.5" width="12" height="9" fill="#8c8c8c" stroke="#bdbdbd" stroke-width="1"/><path d="M1 9 L1 6 L3.5 3.5 L6 6.5 L8.5 7 L12 7.5 L12 9Z" fill="#111"/></svg>
<svg class="abs" style="left:677px;top:24px" width="5" height="3" viewBox="0 0 5 3"><path d="M0 0 L5 0 L2.5 3Z" fill="#8a8a8a"/></svg>
<div class="abs" style="left:1122px;top:16px;width:52px;height:16px;background:#2f2f2f"></div>
<svg class="abs" style="left:1167px;top:24px" width="5" height="3" viewBox="0 0 5 3"><path d="M0 0 L5 0 L2.5 3Z" fill="#8a8a8a"/></svg>
<div class="abs" style="left:1184px;top:18px;width:202px;height:13px;border-radius:7px;background:#333;border:1px solid #242424"></div>
<svg class="abs" style="left:1188px;top:20px" width="9" height="9" viewBox="0 0 9 9"><circle cx="3.5" cy="3.5" r="2.6" fill="none" stroke="#6a6a6a" stroke-width="1.2"/><path d="M5.5 5.5 L8.5 8.5" stroke="#6a6a6a" stroke-width="1.3"/></svg>
<div class="txt" style="left:1199px;top:16px;color:#7a7a7a;letter-spacing:0.3px">All</div>

<div class="txt" style="left:1339px;top:39px;color:#f4f6fa;font-weight:bold;font-size:12px;letter-spacing:0">y</div>
<div class="txt" style="left:1306px;top:74px;color:#f4f6fa;font-weight:bold;font-size:11px;letter-spacing:0">x</div>
<svg class="abs" style="left:1373px;top:47px" width="9" height="9" viewBox="0 0 9 9"><path d="M2 4 V2.8 A2.3 2.3 0 0 1 6.6 2.8 V4" fill="none" stroke="#c8d0e0" stroke-width="1" opacity="0.8"/><rect x="1" y="4" width="7" height="4.5" fill="#c8d0e0" opacity="0.8"/></svg>
<svg class="abs" style="left:1319px;top:128px" width="10" height="13" viewBox="0 0 10 13"><path d="M9 1 L1 6.5 L9 12 M1 6.5 H9" fill="none" stroke="#d0e4f4" stroke-width="1.2" opacity="0.9"/></svg>
<div class="txt" style="left:1330px;top:127px;color:#afc2d8;letter-spacing:0.5px;font-size:10.5px">Persp</div>
<div class="abs" style="left:32px;top:52px"><svg class="ic" width="12" height="12" viewBox="0 0 12 12"><path d="M6 0.5 L11.5 3 L11.5 9 L6 11.5 L0.5 9 L0.5 3Z" fill="#8a8a8a"/><path d="M6 0.5 L11.5 3 L6 5.5 L0.5 3Z" fill="#d6d6d6"/><path d="M0.5 3 L6 5.5 L6 11.5 L0.5 9Z" fill="#a9a9a9"/><path d="M6 5.5 L11.5 3 L11.5 9 L6 11.5Z" fill="#7c7c7c"/></svg></div><div class="hr" style="left:48px;top:50px">Main Camera</div>
<div class="abs" style="left:32px;top:68px"><svg class="ic" width="12" height="12" viewBox="0 0 12 12"><path d="M6 0.5 L11.5 3 L11.5 9 L6 11.5 L0.5 9 L0.5 3Z" fill="#8a8a8a"/><path d="M6 0.5 L11.5 3 L6 5.5 L0.5 3Z" fill="#d6d6d6"/><path d="M0.5 3 L6 5.5 L6 11.5 L0.5 9Z" fill="#a9a9a9"/><path d="M6 5.5 L11.5 3 L11.5 9 L6 11.5Z" fill="#7c7c7c"/></svg></div><div class="hr" style="left:48px;top:66px">Directional Light</div>
<div class="abs" style="left:18px;top:87px"><svg class="ar" width="10" height="8" viewBox="0 0 10 8"><path d="M0.5 0.5 L9.5 0.5 L5 7.5Z" fill="#606060"/></svg></div><div class="abs" style="left:32px;top:84px"><svg class="ic" width="14" height="14" viewBox="0 0 14 14"><path d="M6 0.5 L11.5 3 L11.5 9 L6 11.5 L0.5 9 L0.5 3Z" fill="#3d7fc4"/><path d="M6 0.5 L11.5 3 L6 5.5 L0.5 3Z" fill="#bfe0fb"/><path d="M0.5 3 L6 5.5 L6 11.5 L0.5 9Z" fill="#6fb0ea"/><path d="M6 5.5 L11.5 3 L11.5 9 L6 11.5Z" fill="#3a78bb"/><path d="M8 7 L12 7 L13.5 8.5 L13.5 13.5 L8 13.5Z" fill="#f2f2f2"/></svg></div><div class="hr blue" style="left:48px;top:82px">Hearing Aid</div>
<div class="abs" style="left:32px;top:103px"><svg class="ar" width="10" height="8" viewBox="0 0 10 8"><path d="M0.5 0.5 L9.5 0.5 L5 7.5Z" fill="#606060"/></svg></div><div class="abs" style="left:46px;top:100px"><svg class="ic" width="12" height="12" viewBox="0 0 12 12"><path d="M6 0.5 L11.5 3 L11.5 9 L6 11.5 L0.5 9 L0.5 3Z" fill="#8a8a8a"/><path d="M6 0.5 L11.5 3 L6 5.5 L0.5 3Z" fill="#d6d6d6"/><path d="M0.5 3 L6 5.5 L6 11.5 L0.5 9Z" fill="#a9a9a9"/><path d="M6 5.5 L11.5 3 L11.5 9 L6 11.5Z" fill="#7c7c7c"/></svg></div><div class="hr blue" style="left:62px;top:98px">Armature</div>
<div class="abs" style="left:46px;top:119px"><svg class="ar" width="10" height="8" viewBox="0 0 10 8"><path d="M0.5 0.5 L9.5 0.5 L5 7.5Z" fill="#606060"/></svg></div><div class="abs" style="left:60px;top:116px"><svg class="ic" width="12" height="12" viewBox="0 0 12 12"><path d="M6 0.5 L11.5 3 L11.5 9 L6 11.5 L0.5 9 L0.5 3Z" fill="#8a8a8a"/><path d="M6 0.5 L11.5 3 L6 5.5 L0.5 3Z" fill="#d6d6d6"/><path d="M0.5 3 L6 5.5 L6 11.5 L0.5 9Z" fill="#a9a9a9"/><path d="M6 5.5 L11.5 3 L11.5 9 L6 11.5Z" fill="#7c7c7c"/></svg></div><div class="hr blue" style="left:76px;top:114px">Bone</div>
<div class="abs" style="left:60px;top:135px"><svg class="ar" width="10" height="8" viewBox="0 0 10 8"><path d="M0.5 0.5 L9.5 0.5 L5 7.5Z" fill="#606060"/></svg></div><div class="abs" style="left:74px;top:132px"><svg class="ic" width="12" height="12" viewBox="0 0 12 12"><path d="M6 0.5 L11.5 3 L11.5 9 L6 11.5 L0.5 9 L0.5 3Z" fill="#8a8a8a"/><path d="M6 0.5 L11.5 3 L6 5.5 L0.5 3Z" fill="#d6d6d6"/><path d="M0.5 3 L6 5.5 L6 11.5 L0.5 9Z" fill="#a9a9a9"/><path d="M6 5.5 L11.5 3 L11.5 9 L6 11.5Z" fill="#7c7c7c"/></svg></div><div class="hr blue" style="left:90px;top:130px">Bone.001</div>
<div class="abs" style="left:74px;top:151px"><svg class="ar" width="10" height="8" viewBox="0 0 10 8"><path d="M0.5 0.5 L9.5 0.5 L5 7.5Z" fill="#606060"/></svg></div><div class="abs" style="left:88px;top:148px"><svg class="ic" width="12" height="12" viewBox="0 0 12 12"><path d="M6 0.5 L11.5 3 L11.5 9 L6 11.5 L0.5 9 L0.5 3Z" fill="#8a8a8a"/><path d="M6 0.5 L11.5 3 L6 5.5 L0.5 3Z" fill="#d6d6d6"/><path d="M0.5 3 L6 5.5 L6 11.5 L0.5 9Z" fill="#a9a9a9"/><path d="M6 5.5 L11.5 3 L11.5 9 L6 11.5Z" fill="#7c7c7c"/></svg></div><div class="hr blue" style="left:104px;top:146px">Bone.002</div>
<div class="abs" style="left:88px;top:167px"><svg class="ar" width="10" height="8" viewBox="0 0 10 8"><path d="M0.5 0.5 L9.5 0.5 L5 7.5Z" fill="#606060"/></svg></div><div class="abs" style="left:102px;top:164px"><svg class="ic" width="12" height="12" viewBox="0 0 12 12"><path d="M6 0.5 L11.5 3 L11.5 9 L6 11.5 L0.5 9 L0.5 3Z" fill="#8a8a8a"/><path d="M6 0.5 L11.5 3 L6 5.5 L0.5 3Z" fill="#d6d6d6"/><path d="M0.5 3 L6 5.5 L6 11.5 L0.5 9Z" fill="#a9a9a9"/><path d="M6 5.5 L11.5 3 L11.5 9 L6 11.5Z" fill="#7c7c7c"/></svg></div><div class="hr blue" style="left:118px;top:162px">Bone.003</div>
<div class="abs" style="left:102px;top:183px"><svg class="ar" width="10" height="8" viewBox="0 0 10 8"><path d="M0.5 0.5 L9.5 0.5 L5 7.5Z" fill="#606060"/></svg></div><div class="abs" style="left:116px;top:180px"><svg class="ic" width="12" height="12" viewBox="0 0 12 12"><path d="M6 0.5 L11.5 3 L11.5 9 L6 11.5 L0.5 9 L0.5 3Z" fill="#8a8a8a"/><path d="M6 0.5 L11.5 3 L6 5.5 L0.5 3Z" fill="#d6d6d6"/><path d="M0.5 3 L6 5.5 L6 11.5 L0.5 9Z" fill="#a9a9a9"/><path d="M6 5.5 L11.5 3 L11.5 9 L6 11.5Z" fill="#7c7c7c"/></svg></div><div class="hr blue" style="left:132px;top:178px">Bone.004</div>
<div class="abs" style="left:116px;top:199px"><svg class="ar" width="10" height="8" viewBox="0 0 10 8"><path d="M0.5 0.5 L9.5 0.5 L5 7.5Z" fill="#606060"/></svg></div><div class="abs" style="left:130px;top:196px"><svg class="ic" width="12" height="12" viewBox="0 0 12 12"><path d="M6 0.5 L11.5 3 L11.5 9 L6 11.5 L0.5 9 L0.5 3Z" fill="#8a8a8a"/><path d="M6 0.5 L11.5 3 L6 5.5 L0.5 3Z" fill="#d6d6d6"/><path d="M0.5 3 L6 5.5 L6 11.5 L0.5 9Z" fill="#a9a9a9"/><path d="M6 5.5 L11.5 3 L11.5 9 L6 11.5Z" fill="#7c7c7c"/></svg></div><div class="hr blue" style="left:146px;top:194px">Bone.005</div>
<div class="abs" style="left:130px;top:215px"><svg class="ar" width="10" height="8" viewBox="0 0 10 8"><path d="M0.5 0.5 L9.5 0.5 L5 7.5Z" fill="#606060"/></svg></div><div class="abs" style="left:144px;top:212px"><svg class="ic" width="12" height="12" viewBox="0 0 12 12"><path d="M6 0.5 L11.5 3 L11.5 9 L6 11.5 L0.5 9 L0.5 3Z" fill="#8a8a8a"/><path d="M6 0.5 L11.5 3 L6 5.5 L0.5 3Z" fill="#d6d6d6"/><path d="M0.5 3 L6 5.5 L6 11.5 L0.5 9Z" fill="#a9a9a9"/><path d="M6 5.5 L11.5 3 L11.5 9 L6 11.5Z" fill="#7c7c7c"/></svg></div><div class="hr blue" style="left:160px;top:210px">Bone.006</div>
<div class="abs" style="left:144px;top:231px"><svg class="ar" width="10" height="8" viewBox="0 0 10 8"><path d="M0.5 0.5 L9.5 0.5 L5 7.5Z" fill="#606060"/></svg></div><div class="abs" style="left:158px;top:228px"><svg class="ic" width="12" height="12" viewBox="0 0 12 12"><path d="M6 0.5 L11.5 3 L11.5 9 L6 11.5 L0.5 9 L0.5 3Z" fill="#8a8a8a"/><path d="M6 0.5 L11.5 3 L6 5.5 L0.5 3Z" fill="#d6d6d6"/><path d="M0.5 3 L6 5.5 L6 11.5 L0.5 9Z" fill="#a9a9a9"/><path d="M6 5.5 L11.5 3 L11.5 9 L6 11.5Z" fill="#7c7c7c"/></svg></div><div class="hr blue" style="left:174px;top:226px">Bone.007</div>
<div class="abs" style="left:158px;top:247px"><svg class="ar" width="10" height="8" viewBox="0 0 10 8"><path d="M0.5 0.5 L9.5 0.5 L5 7.5Z" fill="#606060"/></svg></div><div class="abs" style="left:172px;top:244px"><svg class="ic" width="12" height="12" viewBox="0 0 12 12"><path d="M6 0.5 L11.5 3 L11.5 9 L6 11.5 L0.5 9 L0.5 3Z" fill="#8a8a8a"/><path d="M6 0.5 L11.5 3 L6 5.5 L0.5 3Z" fill="#d6d6d6"/><path d="M0.5 3 L6 5.5 L6 11.5 L0.5 9Z" fill="#a9a9a9"/><path d="M6 5.5 L11.5 3 L11.5 9 L6 11.5Z" fill="#7c7c7c"/></svg></div><div class="hr blue" style="left:188px;top:242px">Bone.008</div>
<div class="abs" style="left:172px;top:263px"><svg class="ar" width="10" height="8" viewBox="0 0 10 8"><path d="M0.5 0.5 L9.5 0.5 L5 7.5Z" fill="#606060"/></svg></div><div class="abs" style="left:186px;top:260px"><svg class="ic" width="12" height="12" viewBox="0 0 12 12"><path d="M6 0.5 L11.5 3 L11.5 9 L6 11.5 L0.5 9 L0.5 3Z" fill="#8a8a8a"/><path d="M6 0.5 L11.5 3 L6 5.5 L0.5 3Z" fill="#d6d6d6"/><path d="M0.5 3 L6 5.5 L6 11.5 L0.5 9Z" fill="#a9a9a9"/><path d="M6 5.5 L11.5 3 L11.5 9 L6 11.5Z" fill="#7c7c7c"/></svg></div><div class="hr blue" style="left:202px;top:258px">Bone.009</div>
<div class="abs" style="left:186px;top:279px"><svg class="ar" width="10" height="8" viewBox="0 0 10 8"><path d="M0.5 0.5 L9.5 0.5 L5 7.5Z" fill="#606060"/></svg></div><div class="abs" style="left:200px;top:276px"><svg class="ic" width="12" height="12" viewBox="0 0 12 12"><path d="M6 0.5 L11.5 3 L11.5 9 L6 11.5 L0.5 9 L0.5 3Z" fill="#8a8a8a"/><path d="M6 0.5 L11.5 3 L6 5.5 L0.5 3Z" fill="#d6d6d6"/><path d="M0.5 3 L6 5.5 L6 11.5 L0.5 9Z" fill="#a9a9a9"/><path d="M6 5.5 L11.5 3 L11.5 9 L6 11.5Z" fill="#7c7c7c"/></svg></div><div class="hr blue" style="left:216px;top:274px">Bone.010</div>
<div class="abs" style="left:200px;top:295px"><svg class="ar" width="10" height="8" viewBox="0 0 10 8"><path d="M0.5 0.5 L9.5 0.5 L5 7.5Z" fill="#606060"/></svg></div><div class="abs" style="left:214px;top:292px"><svg class="ic" width="12" height="12" viewBox="0 0 12 12"><path d="M6 0.5 L11.5 3 L11.5 9 L6 11.5 L0.5 9 L0.5 3Z" fill="#8a8a8a"/><path d="M6 0.5 L11.5 3 L6 5.5 L0.5 3Z" fill="#d6d6d6"/><path d="M0.5 3 L6 5.5 L6 11.5 L0.5 9Z" fill="#a9a9a9"/><path d="M6 5.5 L11.5 3 L11.5 9 L6 11.5Z" fill="#7c7c7c"/></svg></div><div class="hr blue" style="left:230px;top:290px">Bone.011</div>
<div class="abs" style="left:214px;top:311px"><svg class="ar" width="10" height="8" viewBox="0 0 10 8"><path d="M0.5 0.5 L9.5 0.5 L5 7.5Z" fill="#606060"/></svg></div><div class="abs" style="left:228px;top:308px"><svg class="ic" width="12" height="12" viewBox="0 0 12 12"><path d="M6 0.5 L11.5 3 L11.5 9 L6 11.5 L0.5 9 L0.5 3Z" fill="#8a8a8a"/><path d="M6 0.5 L11.5 3 L6 5.5 L0.5 3Z" fill="#d6d6d6"/><path d="M0.5 3 L6 5.5 L6 11.5 L0.5 9Z" fill="#a9a9a9"/><path d="M6 5.5 L11.5 3 L11.5 9 L6 11.5Z" fill="#7c7c7c"/></svg></div><div class="hr blue" style="left:244px;top:306px">Bone.012</div>
<div class="abs" style="left:228px;top:327px"><svg class="ar" width="10" height="8" viewBox="0 0 10 8"><path d="M0.5 0.5 L9.5 0.5 L5 7.5Z" fill="#606060"/></svg></div><div class="abs" style="left:242px;top:324px"><svg class="ic" width="12" height="12" viewBox="0 0 12 12"><path d="M6 0.5 L11.5 3 L11.5 9 L6 11.5 L0.5 9 L0.5 3Z" fill="#8a8a8a"/><path d="M6 0.5 L11.5 3 L6 5.5 L0.5 3Z" fill="#d6d6d6"/><path d="M0.5 3 L6 5.5 L6 11.5 L0.5 9Z" fill="#a9a9a9"/><path d="M6 5.5 L11.5 3 L11.5 9 L6 11.5Z" fill="#7c7c7c"/></svg></div><div class="hr blue" style="left:258px;top:322px">Bone.013</div>
<div class="abs" style="left:242px;top:343px"><svg class="ar" width="10" height="8" viewBox="0 0 10 8"><path d="M0.5 0.5 L9.5 0.5 L5 7.5Z" fill="#606060"/></svg></div><div class="abs" style="left:256px;top:340px"><svg class="ic" width="12" height="12" viewBox="0 0 12 12"><path d="M6 0.5 L11.5 3 L11.5 9 L6 11.5 L0.5 9 L0.5 3Z" fill="#8a8a8a"/><path d="M6 0.5 L11.5 3 L6 5.5 L0.5 3Z" fill="#d6d6d6"/><path d="M0.5 3 L6 5.5 L6 11.5 L0.5 9Z" fill="#a9a9a9"/><path d="M6 5.5 L11.5 3 L11.5 9 L6 11.5Z" fill="#7c7c7c"/></svg></div><div class="hr blue" style="left:272px;top:338px">Bone.014</div>
<div class="abs" style="left:256px;top:359px"><svg class="ar" width="10" height="8" viewBox="0 0 10 8"><path d="M0.5 0.5 L9.5 0.5 L5 7.5Z" fill="#606060"/></svg></div><div class="abs" style="left:270px;top:356px"><svg class="ic" width="12" height="12" viewBox="0 0 12 12"><path d="M6 0.5 L11.5 3 L11.5 9 L6 11.5 L0.5 9 L0.5 3Z" fill="#8a8a8a"/><path d="M6 0.5 L11.5 3 L6 5.5 L0.5 3Z" fill="#d6d6d6"/><path d="M0.5 3 L6 5.5 L6 11.5 L0.5 9Z" fill="#a9a9a9"/><path d="M6 5.5 L11.5 3 L11.5 9 L6 11.5Z" fill="#7c7c7c"/></svg></div><div class="hr blue" style="left:286px;top:354px">Bone.015</div>
<div class="abs" style="left:270px;top:375px"><svg class="ar" width="10" height="8" viewBox="0 0 10 8"><path d="M0.5 0.5 L9.5 0.5 L5 7.5Z" fill="#606060"/></svg></div><div class="abs" style="left:284px;top:372px"><svg class="ic" width="12" height="12" viewBox="0 0 12 12"><path d="M6 0.5 L11.5 3 L11.5 9 L6 11.5 L0.5 9 L0.5 3Z" fill="#8a8a8a"/><path d="M6 0.5 L11.5 3 L6 5.5 L0.5 3Z" fill="#d6d6d6"/><path d="M0.5 3 L6 5.5 L6 11.5 L0.5 9Z" fill="#a9a9a9"/><path d="M6 5.5 L11.5 3 L11.5 9 L6 11.5Z" fill="#7c7c7c"/></svg></div><div class="hr blue" style="left:300px;top:370px">Bone.016</div>
<div class="abs" style="left:284px;top:391px"><svg class="ar" width="10" height="8" viewBox="0 0 10 8"><path d="M0.5 0.5 L9.5 0.5 L5 7.5Z" fill="#606060"/></svg></div><div class="abs" style="left:298px;top:388px"><svg class="ic" width="12" height="12" viewBox="0 0 12 12"><path d="M6 0.5 L11.5 3 L11.5 9 L6 11.5 L0.5 9 L0.5 3Z" fill="#8a8a8a"/><path d="M6 0.5 L11.5 3 L6 5.5 L0.5 3Z" fill="#d6d6d6"/><path d="M0.5 3 L6 5.5 L6 11.5 L0.5 9Z" fill="#a9a9a9"/><path d="M6 5.5 L11.5 3 L11.5 9 L6 11.5Z" fill="#7c7c7c"/></svg></div><div class="hr blue" style="left:314px;top:386px">Bone.017</div>
<div class="abs" style="left:312px;top:404px"><svg class="ic" width="12" height="12" viewBox="0 0 12 12"><path d="M6 0.5 L11.5 3 L11.5 9 L6 11.5 L0.5 9 L0.5 3Z" fill="#8a8a8a"/><path d="M6 0.5 L11.5 3 L6 5.5 L0.5 3Z" fill="#d6d6d6"/><path d="M0.5 3 L6 5.5 L6 11.5 L0.5 9Z" fill="#a9a9a9"/><path d="M6 5.5 L11.5 3 L11.5 9 L6 11.5Z" fill="#7c7c7c"/></svg></div><div class="hr blue" style="left:328px;top:402px">Bone.017_end</div>
<div class="abs" style="left:32px;top:423px"><svg class="ar" width="10" height="8" viewBox="0 0 10 8"><path d="M0.5 0.5 L9.5 0.5 L5 7.5Z" fill="#606060"/></svg></div><div class="abs" style="left:46px;top:420px"><svg class="ic" width="12" height="12" viewBox="0 0 12 12"><path d="M6 0.5 L11.5 3 L11.5 9 L6 11.5 L0.5 9 L0.5 3Z" fill="#8a8a8a"/><path d="M6 0.5 L11.5 3 L6 5.5 L0.5 3Z" fill="#d6d6d6"/><path d="M0.5 3 L6 5.5 L6 11.5 L0.5 9Z" fill="#a9a9a9"/><path d="M6 5.5 L11.5 3 L11.5 9 L6 11.5Z" fill="#7c7c7c"/></svg></div><div class="hr blue" style="left:62px;top:418px">Cube</div>
<div class="abs" style="left:60px;top:436px"><svg class="ic" width="12" height="12" viewBox="0 0 12 12"><path d="M6 0.5 L11.5 3 L11.5 9 L6 11.5 L0.5 9 L0.5 3Z" fill="#8a8a8a"/><path d="M6 0.5 L11.5 3 L6 5.5 L0.5 3Z" fill="#d6d6d6"/><path d="M0.5 3 L6 5.5 L6 11.5 L0.5 9Z" fill="#a9a9a9"/><path d="M6 5.5 L11.5 3 L11.5 9 L6 11.5Z" fill="#7c7c7c"/></svg></div><div class="hr blue" style="left:76px;top:434px">Cylinder</div>
<div class="abs" style="left:46px;top:452px"><svg class="ic" width="12" height="12" viewBox="0 0 12 12"><path d="M6 0.5 L11.5 3 L11.5 9 L6 11.5 L0.5 9 L0.5 3Z" fill="#8a8a8a"/><path d="M6 0.5 L11.5 3 L6 5.5 L0.5 3Z" fill="#d6d6d6"/><path d="M0.5 3 L6 5.5 L6 11.5 L0.5 9Z" fill="#a9a9a9"/><path d="M6 5.5 L11.5 3 L11.5 9 L6 11.5Z" fill="#7c7c7c"/></svg></div><div class="hr blue" style="left:62px;top:450px">Cylinder.001</div>
<div class="abs" style="left:46px;top:468px"><svg class="ic" width="12" height="12" viewBox="0 0 12 12"><path d="M6 0.5 L11.5 3 L11.5 9 L6 11.5 L0.5 9 L0.5 3Z" fill="#8a8a8a"/><path d="M6 0.5 L11.5 3 L6 5.5 L0.5 3Z" fill="#d6d6d6"/><path d="M0.5 3 L6 5.5 L6 11.5 L0.5 9Z" fill="#a9a9a9"/><path d="M6 5.5 L11.5 3 L11.5 9 L6 11.5Z" fill="#7c7c7c"/></svg></div><div class="hr blue" style="left:62px;top:466px">Cylinder.002</div>
<div class="abs" style="left:46px;top:484px"><svg class="ic" width="12" height="12" viewBox="0 0 12 12"><path d="M6 0.5 L11.5 3 L11.5 9 L6 11.5 L0.5 9 L0.5 3Z" fill="#8a8a8a"/><path d="M6 0.5 L11.5 3 L6 5.5 L0.5 3Z" fill="#d6d6d6"/><path d="M0.5 3 L6 5.5 L6 11.5 L0.5 9Z" fill="#a9a9a9"/><path d="M6 5.5 L11.5 3 L11.5 9 L6 11.5Z" fill="#7c7c7c"/></svg></div><div class="hr blue" style="left:62px;top:482px">Cylinder.003</div>
</body></html>
